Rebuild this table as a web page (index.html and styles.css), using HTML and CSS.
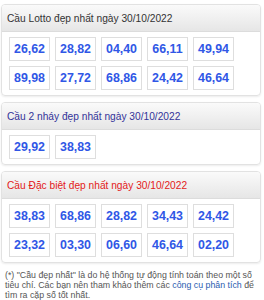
FILE: index.html
```html
<!DOCTYPE html>
<html lang="vi">
<head>
<meta charset="utf-8">
<link rel="stylesheet" href="styles.css">
</head>
<body>
<div class="panel">
  <div class="head">Cầu Lotto đẹp nhất ngày 30/10/2022</div>
  <div class="grid">
    <span class="num">26,62</span><span class="num">28,82</span><span class="num">04,40</span><span class="num">66,11</span><span class="num">49,94</span>
    <span class="num">89,98</span><span class="num">27,72</span><span class="num">68,86</span><span class="num">24,42</span><span class="num">46,64</span>
  </div>
</div>
<div class="panel">
  <div class="head blue">Cầu 2 nháy đẹp nhất ngày 30/10/2022</div>
  <div class="grid">
    <span class="num">29,92</span><span class="num">38,83</span>
  </div>
</div>
<div class="panel">
  <div class="head red">Cầu Đặc biệt đẹp nhất ngày 30/10/2022</div>
  <div class="grid">
    <span class="num">38,83</span><span class="num">68,86</span><span class="num">28,82</span><span class="num">34,43</span><span class="num">24,42</span>
    <span class="num">23,32</span><span class="num">03,30</span><span class="num">06,60</span><span class="num">46,64</span><span class="num">02,20</span>
  </div>
</div>
<p class="note">(*) "Cầu đẹp nhất" là do hệ thống tự động tính toán theo một số tiêu chí. Các bạn nên tham khảo thêm các <a class="link">công cụ phân tích</a> để tìm ra cặp số tốt nhất.</p>
</body>
</html>
```

FILE: styles.css
```css
body {
  margin: 0;
  padding: 4px 3px 0 1px;
  font-family: "Liberation Sans", Arial, sans-serif;
  background: #fff;
}
.panel {
  border: 1px solid #e2e2e2;
  border-radius: 4px;
  box-shadow: 0 1px 2px rgba(0,0,0,0.08);
  margin-bottom: 6px;
  overflow: hidden;
}
.head {
  height: 26px;
  line-height: 27px;
  padding-left: 5px;
  font-size: 10.2px;
  color: #333;
  background: linear-gradient(#fafafa, #e6e6e6);
  border-bottom: 1px solid #dcdcdc;
}
.head.blue { color: #333399; }
.head.red { color: #e31a1a; }
.grid {
  display: flex;
  flex-wrap: wrap;
  gap: 5px 5px;
  padding: 5px 6px 5px 7px;
}
.num {
  box-sizing: border-box;
  width: 41px;
  height: 24px;
  border: 1px solid #dedede;
  text-align: center;
  line-height: 22px;
  font-size: 12.4px;
  font-weight: bold;
  color: #3057e6;
}
.note {
  margin: 0;
  padding: 1px 0 0 4px;
  font-size: 8.8px;
  line-height: 10px;
  color: #555;
}
.link { color: #2a5db0; }
```
